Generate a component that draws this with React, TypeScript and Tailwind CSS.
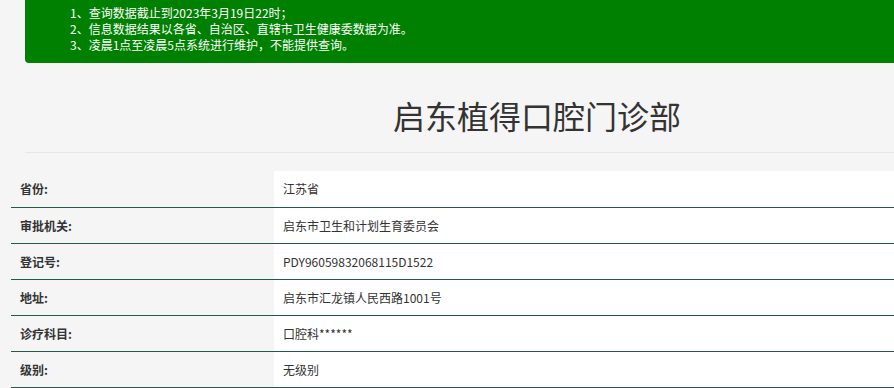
import React from "react";

const NOTICES = [
  "1、查询数据截止到2023年3月19日22时；",
  "2、信息数据结果以各省、自治区、直辖市卫生健康委数据为准。",
  "3、凌晨1点至凌晨5点系统进行维护，不能提供查询。",
];

const ROWS: [string, string][] = [
  ["省份:", "江苏省"],
  ["审批机关:", "启东市卫生和计划生育委员会"],
  ["登记号:", "PDY96059832068115D1522"],
  ["地址:", "启东市汇龙镇人民西路1001号"],
  ["诊疗科目:", "口腔科******"],
  ["级别:", "无级别"],
];

//clinic detail page: notice banner, clinic name and info table
const App = () => {
  return (
    <div
      className="h-[388px] w-[894px] overflow-hidden bg-[#f5f5f5] text-[#333]"
      style={{ fontFamily: '"Microsoft YaHei", "Noto Sans CJK SC", sans-serif' }}
    >
      <div className="ml-[25px] w-[1024px]">
        <div className="h-[63px] rounded-bl-[4px] bg-[#008000] pl-[45px] pt-[5px] text-[12px] leading-[16px] text-white">
          {NOTICES.map((line) => (
            <p key={line}>{line}</p>
          ))}
        </div>

        <div className="flex h-[90px] items-center justify-center border-b border-[#e6e6e6] pt-[14px]">
          <h1 className="text-[32px] font-normal leading-none text-[#333]">启东植得口腔门诊部</h1>
        </div>
      </div>

      <table className="ml-[11px] mt-[18px] w-[1100px] border-collapse text-[12px]">
        <tbody>
          {ROWS.map(([label, value]) => (
            <tr key={label} className="h-[36px] border-b border-[#22594a]">
              <td className="w-[263px] bg-[#f5f5f5] pl-[9px] pt-px font-bold text-[#333]">{label}</td>
              <td className="bg-white pl-[9px] pt-px text-[#333]">{value}</td>
            </tr>
          ))}
        </tbody>
      </table>
    </div>
  );
};

export default App;
